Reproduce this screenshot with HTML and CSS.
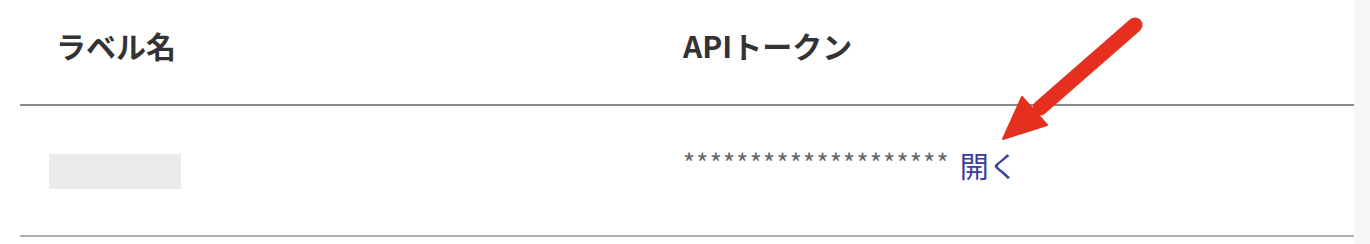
FILE: index.html
```html
<!DOCTYPE html>
<html lang="ja">

<head>
    <meta charset="UTF-8">
    <meta name="viewport" content="width=device-width, initial-scale=1.0">
    <title>APIトークン</title>
    <link rel="stylesheet" href="styles.css">
</head>

<body>
    <div class="page">
        <div class="tokens">
            <div class="cell head">ラベル名</div>
            <div class="cell head">APIトークン</div>
            <div class="cell body">
                <span class="label-mask"></span>
            </div>
            <div class="cell body">
                <span class="secret">********************</span>
                <a class="open" href="#">開く</a>
            </div>
        </div>
        <svg class="pointer" width="1370" height="244" viewBox="0 0 1370 244">
            <line x1="1135" y1="25" x2="1040" y2="108" stroke="#e5301f" stroke-width="15" stroke-linecap="round" />
            <polygon points="1003,139 1022,97 1047,125" fill="#e5301f" stroke="#e5301f" stroke-width="2" stroke-linejoin="round" />
        </svg>
    </div>
</body>

</html>
```

FILE: styles.css
```css
body {
    margin: 0;
    background-color: #f8f7f5;
    font-family: "Noto Sans CJK JP", "Noto Sans", sans-serif;
    color: #333333;
}

.page {
    position: relative;
    width: 1354px;
    height: 244px;
    background-color: #ffffff;
}

.tokens {
    display: grid;
    grid-template-columns: 625px 1fr;
    margin-left: 20px;
}

.cell {
    display: flex;
    align-items: center;
    padding-left: 38px;
}

.head {
    height: 90px;
    padding-bottom: 14px;
    font-size: 30px;
    font-weight: bold;
    border-bottom: 2px solid #8a8a8a;
}

.head:first-child {
    padding-left: 36px;
}

.body {
    box-sizing: border-box;
    height: 131px;
    padding-bottom: 12px;
    border-bottom: 2px solid #b0b0b0;
}

.label-mask {
    display: block;
    width: 132px;
    height: 35px;
    margin-left: -9px;
    margin-top: 14px;
    background-color: #ebebeb;
}

.secret {
    font-size: 26px;
    letter-spacing: 1.2px;
    color: #666666;
    margin-top: -6px;
}

.open {
    font-size: 29px;
    color: #3d3d9c;
    text-decoration: none;
    margin-left: 10px;
}

.pointer {
    position: absolute;
    left: 0;
    top: 0;
    pointer-events: none;
}
```
